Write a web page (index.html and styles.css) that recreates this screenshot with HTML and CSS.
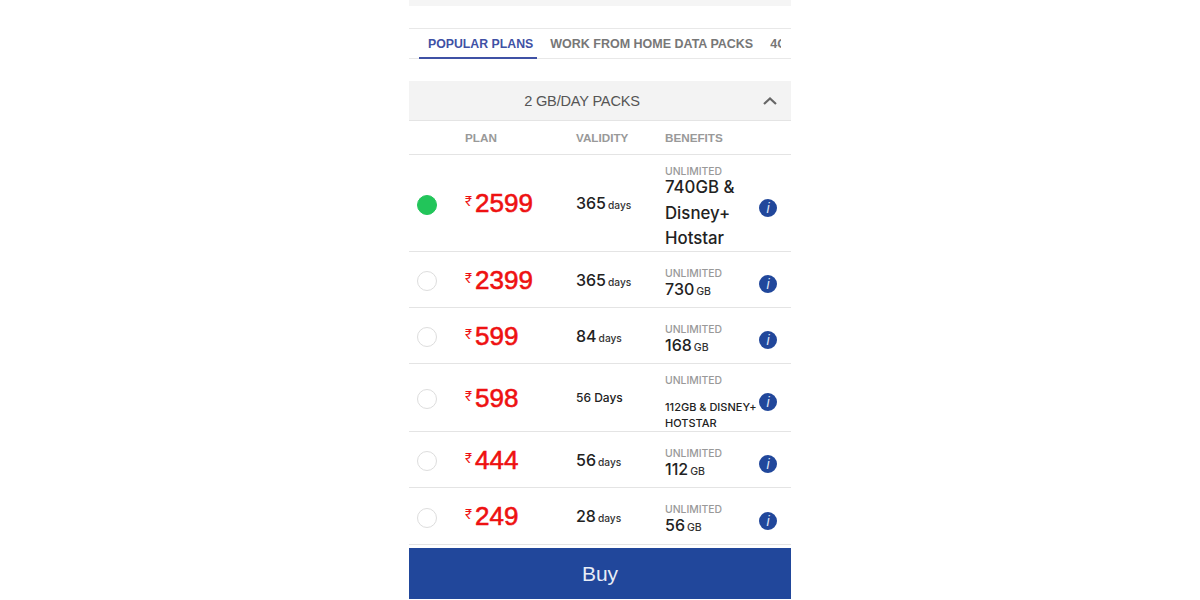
FILE: index.html
```html
<!DOCTYPE html>
<html lang="en">
<head>
    <meta charset="UTF-8">
    <meta name="viewport" content="width=device-width, initial-scale=1.0">
    <title>Recharge Plans</title>
    <link rel="stylesheet" href="styles.css">
</head>
<body>
    <div class="container">
        <div class="top-strip"></div>

        <div class="tabs">
            <div class="tab-scroll">
                <div class="tab active">POPULAR PLANS</div>
                <div class="tab">WORK FROM HOME DATA PACKS</div>
                <div class="tab">4G DATA VOUCHERS</div>
            </div>
        </div>

        <div class="pack-header">
            <span>2 GB/DAY PACKS</span>
            <svg class="chevron" width="16" height="10" viewBox="0 0 16 10">
                <path d="M2 8 L8 2.5 L14 8" fill="none" stroke="#666" stroke-width="2.2"/>
            </svg>
        </div>

        <div class="row head-row">
            <div></div>
            <div>PLAN</div>
            <div>VALIDITY</div>
            <div>BENEFITS</div>
        </div>

        <div class="row plan-row tall">
            <div><span class="radio selected"></span></div>
            <div class="price"><span class="rupee">₹</span>2599</div>
            <div class="validity"><b>365</b><small>days</small></div>
            <div class="benefits top">
                <div class="label">UNLIMITED</div>
                <div class="long-benefit">740GB &amp; Disney+ Hotstar</div>
            </div>
            <div><span class="info">i</span></div>
        </div>

        <div class="row plan-row">
            <div><span class="radio"></span></div>
            <div class="price"><span class="rupee">₹</span>2399</div>
            <div class="validity"><b>365</b><small>days</small></div>
            <div class="benefits">
                <div class="label">UNLIMITED</div>
                <div class="data"><b>730</b><small>GB</small></div>
            </div>
            <div><span class="info">i</span></div>
        </div>

        <div class="row plan-row">
            <div><span class="radio"></span></div>
            <div class="price"><span class="rupee">₹</span>599</div>
            <div class="validity"><b>84</b><small>days</small></div>
            <div class="benefits">
                <div class="label">UNLIMITED</div>
                <div class="data"><b>168</b><small>GB</small></div>
            </div>
            <div><span class="info">i</span></div>
        </div>

        <div class="row plan-row mid">
            <div><span class="radio"></span></div>
            <div class="price"><span class="rupee">₹</span>598</div>
            <div class="validity plain">56 Days</div>
            <div class="benefits top">
                <div class="label">UNLIMITED</div>
                <div class="small-benefit">112GB &amp; DISNEY+ HOTSTAR</div>
            </div>
            <div><span class="info">i</span></div>
        </div>

        <div class="row plan-row">
            <div><span class="radio"></span></div>
            <div class="price"><span class="rupee">₹</span>444</div>
            <div class="validity"><b>56</b><small>days</small></div>
            <div class="benefits">
                <div class="label">UNLIMITED</div>
                <div class="data"><b>112</b><small>GB</small></div>
            </div>
            <div><span class="info">i</span></div>
        </div>

        <div class="row plan-row last">
            <div><span class="radio"></span></div>
            <div class="price"><span class="rupee">₹</span>249</div>
            <div class="validity"><b>28</b><small>days</small></div>
            <div class="benefits">
                <div class="label">UNLIMITED</div>
                <div class="data"><b>56</b><small>GB</small></div>
            </div>
            <div><span class="info">i</span></div>
        </div>

        <button class="buy">Buy</button>
    </div>
</body>
</html>
```

FILE: styles.css
```css
/* Global Styles */
body {
    margin: 0;
    background: #fff;
    font-family: 'Inter', 'Liberation Sans', sans-serif;
    color: #222;
    overflow: hidden;
}

.container {
    width: 382px;
    margin: 0 auto;
}

.top-strip {
    height: 6px;
    background: #f5f5f5;
    margin-bottom: 22px;
}

/* Tabs */
.tabs {
    height: 29px;
    padding: 0 10px;
    border-top: 1px solid #e8e8e8;
    border-bottom: 1px solid #e8e8e8;
}

.tab-scroll {
    display: flex;
    gap: 9px;
    height: 30px;
    overflow: hidden;
    white-space: nowrap;
}

.tab {
    flex: none;
    padding: 0 4px;
    font-family: 'Liberation Sans', sans-serif;
    font-size: 12.5px;
    font-weight: bold;
    line-height: 30px;
    color: #777;
}

.tab.active {
    box-sizing: border-box;
    height: 30px;
    padding-left: 9px;
    font-size: 12.3px;
    color: #3f51a5;
    border-bottom: 2px solid #3f51a5;
}

/* Pack header */
.pack-header {
    position: relative;
    height: 39px;
    margin-top: 22px;
    background: #f3f3f3;
    border-bottom: 1px solid #e4e4e4;
    display: flex;
    align-items: center;
    justify-content: center;
    padding-right: 36px;
    font-family: 'Liberation Sans', sans-serif;
    font-size: 14.6px;
    letter-spacing: -0.2px;
    color: #555;
}

.chevron {
    position: absolute;
    right: 13px;
    top: 15px;
}

/* Rows */
.row {
    display: grid;
    grid-template-columns: 56px 111px 89px 93px 33px;
    align-items: center;
    border-bottom: 1px solid #e4e4e4;
}

.head-row {
    height: 33px;
    font-family: 'Liberation Sans', sans-serif;
    font-size: 11.7px;
    font-weight: bold;
    color: #999;
}

.plan-row {
    height: 55px;
}

.plan-row.tall {
    height: 96px;
}

.plan-row.mid {
    height: 67px;
}

.plan-row.last {
    height: 56px;
}

.radio {
    display: block;
    box-sizing: border-box;
    width: 20px;
    height: 20px;
    margin-left: 8px;
    margin-top: 3px;
    border: 1px solid #ddd;
    border-radius: 50%;
}

.radio.selected {
    margin-top: 4px;
    background: #22c55a;
    border-color: #22c55a;
}

.price {
    font-family: 'Liberation Sans', sans-serif;
    font-size: 26px;
    color: #ee1111;
    -webkit-text-stroke: 0.6px #ee1111;
    line-height: 30px;
    margin-top: -2px;
}

.rupee {
    font-family: 'Inter', sans-serif;
    font-size: 13px;
    font-weight: 400;
    -webkit-text-stroke: 0;
    vertical-align: 6px;
    margin-right: 3px;
}

.validity b,
.data b {
    font-size: 16px;
    font-weight: 500;
}

.validity small {
    margin-left: 2px;
    font-size: 10.2px;
    font-weight: 500;
    color: #333;
}

.data small {
    margin-left: 2px;
    font-size: 10.5px;
    font-weight: 500;
    color: #333;
}

.validity.plain {
    font-size: 12px;
    font-weight: 500;
}

.benefits {
    margin-top: 8px;
}

.benefits.top {
    align-self: start;
    margin-top: 10px;
}

.label {
    font-size: 10.4px;
    font-weight: 500;
    color: #999;
    line-height: 14px;
}

.data {
    margin-top: -1px;
    line-height: 19px;
}

.long-benefit {
    margin-top: -4px;
    font-size: 16.8px;
    font-weight: 500;
    line-height: 25.5px;
}

.small-benefit {
    margin-top: 11px;
    font-size: 11px;
    font-weight: 500;
    line-height: 16px;
}

.info {
    display: block;
    width: 18px;
    height: 18px;
    margin-left: 1px;
    margin-top: 9px;
    border-radius: 50%;
    background: #21479b;
    color: #dfe6f5;
    font-family: 'Liberation Sans', sans-serif;
    font-size: 14px;
    font-style: italic;
    line-height: 18px;
    text-align: center;
}

/* Buy button */
.buy {
    display: block;
    width: 100%;
    height: 51px;
    margin-top: 3px;
    border: none;
    background: #21479b;
    color: #e8edf6;
    font-family: 'Liberation Sans', sans-serif;
    font-size: 21px;
}
```
